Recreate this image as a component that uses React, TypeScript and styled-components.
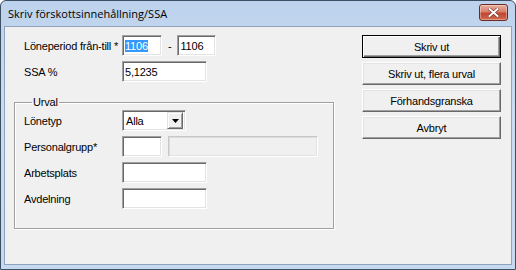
import React from 'react'
import styled, { createGlobalStyle } from 'styled-components'

const GlobalStyle = createGlobalStyle`
    html, body {
        margin:0;
        padding:0;
        background:#ffffff;
    }
    * {
        box-sizing:border-box;
    }
`

const Window = styled.div`
    width:516px;
    height:270px;
    display:flex;
    flex-direction:column;
    background:linear-gradient(#bdd2ec, #c9dcf1 40%, #c6d9ef);
    border:1px solid #3f4f63;
    border-radius:6px 6px 0 0;
    overflow:hidden;
`

const TitleBar = styled.div`
    height:25px;
    flex:none;
    display:flex;
    align-items:center;
    justify-content:space-between;
    padding:0 7px 0 7px;
    font-family:"Open Sans", "Noto Sans", sans-serif;
    font-size:11px;
    color:#000;
`

const CloseButton = styled.div`
    width:29px;
    height:17px;
    margin-top:-3px;
    border:1px solid #6b2b22;
    border-radius:3px;
    background:linear-gradient(#e6ae9f, #d9806b 45%, #c2452f 55%, #cf6a50);
    box-shadow:inset 0 0 0 1px rgba(255,255,255,0.35);
    display:flex;
    align-items:center;
    justify-content:center;
`

const Client = styled.div`
    flex:1;
    margin:0 3px 4px 3px;
    background:#f0f0f0;
    border:1px solid #8ea3bd;
    display:flex;
    padding:8px 0 0 9px;
    font-family:"Liberation Sans", Arial, sans-serif;
    font-size:11px;
    letter-spacing:-0.2px;
    color:#000;
`

const FormColumn = styled.div`
    width:320px;
    display:flex;
    flex-direction:column;
`

const Rows = styled.div`
    display:grid;
    grid-template-columns:98px auto;
    row-gap:5px;
    padding-left:10px;
    align-items:center;
`

const Label = styled.span`
    white-space:nowrap;
`

const Field = styled.div`
    display:flex;
    align-items:center;
    gap:6px;
`

const TextBox = styled.div<{ $w: number; $disabled?: boolean }>`
    width:${p => p.$w}px;
    height:21px;
    display:flex;
    align-items:center;
    padding-left:2px;
    background:${p => (p.$disabled ? '#f0f0f0' : '#ffffff')};
    border-style:solid;
    border-width:1px;
    border-color:${p =>
        p.$disabled ? '#c8c8c8 #ffffff #ffffff #c8c8c8' : '#a0a0a0 #ffffff #ffffff #a0a0a0'};
    box-shadow:${p =>
        p.$disabled
            ? 'inset 1px 1px 0 #dcdcdc, inset -1px -1px 0 #e3e3e3'
            : 'inset 1px 1px 0 #696969, inset -1px -1px 0 #e3e3e3'};
`

const Selected = styled.span`
    background:#3399ff;
    color:#ffffff;
`

const Group = styled.fieldset`
    margin:14px 0 0 0;
    padding:2px 0 0 9px;
    width:320px;
    height:133px;
    border:1px solid #a0a0a0;
    box-shadow:inset 1px 1px 0 #ffffff, 1px 1px 0 #ffffff;
`

const Legend = styled.legend`
    margin-left:8px;
    padding:0 1px;
    font-size:11px;
`

const GroupRows = styled.div`
    display:grid;
    grid-template-columns:98px auto;
    grid-auto-rows:21px;
    row-gap:5px;
    align-items:center;
`

const Select = styled.div`
    width:64px;
    height:21px;
    display:flex;
    align-items:center;
    justify-content:space-between;
    padding:0 2px 0 3px;
    background:#ffffff;
    border-style:solid;
    border-width:1px;
    border-color:#a0a0a0 #ffffff #ffffff #a0a0a0;
    box-shadow:inset 1px 1px 0 #696969, inset -1px -1px 0 #e3e3e3;
`

const DropButton = styled.div`
    width:16px;
    height:17px;
    display:flex;
    align-items:center;
    justify-content:center;
    background:#f0f0f0;
    border-style:solid;
    border-width:1px;
    border-color:#e3e3e3 #696969 #696969 #e3e3e3;
    box-shadow:inset 1px 1px 0 #ffffff, inset -1px -1px 0 #a0a0a0;
`

const ButtonColumn = styled.div`
    margin-left:28px;
    width:139px;
    display:flex;
    flex-direction:column;
    gap:4px;
`

const Button = styled.div<{ $default?: boolean }>`
    height:23px;
    display:flex;
    align-items:center;
    justify-content:center;
    background:#f0f0f0;
    border-style:solid;
    border-width:1px;
    border-color:${p => (p.$default ? '#000000' : '#ffffff #696969 #696969 #ffffff')};
    box-shadow:${p =>
        p.$default
            ? 'inset 1px 1px 0 #ffffff, inset -1px -1px 0 #696969, inset -2px -2px 0 #a0a0a0'
            : 'inset -1px -1px 0 #a0a0a0, inset 1px 1px 0 #e3e3e3'};
`

const App = () => {
    return (
        <>
            <GlobalStyle />
            <Window>
                <TitleBar>
                    <span>Skriv förskottsinnehållning/SSA</span>
                    <CloseButton>
                        <svg width="11" height="9" viewBox="0 0 11 9">
                            <path d="M1.5 1 L9.5 8 M9.5 1 L1.5 8" stroke="#7a2a20" strokeWidth="3.2" strokeLinecap="square" />
                            <path d="M1.5 1 L9.5 8 M9.5 1 L1.5 8" stroke="#ffffff" strokeWidth="2" strokeLinecap="square" />
                        </svg>
                    </CloseButton>
                </TitleBar>
                <Client>
                    <FormColumn>
                        <Rows>
                            <Label>Löneperiod från-till *</Label>
                            <Field>
                                <TextBox $w={40}><Selected>1106</Selected></TextBox>
                                <span>-</span>
                                <TextBox $w={39}>1106</TextBox>
                            </Field>
                            <Label>SSA %</Label>
                            <TextBox $w={85}>5,1235</TextBox>
                        </Rows>
                        <Group>
                            <Legend>Urval</Legend>
                            <GroupRows>
                                <Label>Lönetyp</Label>
                                <Select>
                                    <span>Alla</span>
                                    <DropButton>
                                        <svg width="7" height="4" viewBox="0 0 7 4">
                                            <path d="M0 0 H7 L3.5 4 Z" fill="#000" />
                                        </svg>
                                    </DropButton>
                                </Select>
                                <Label>Personalgrupp*</Label>
                                <Field>
                                    <TextBox $w={40} />
                                    <TextBox $w={150} $disabled />
                                </Field>
                                <Label>Arbetsplats</Label>
                                <TextBox $w={85} />
                                <Label>Avdelning</Label>
                                <TextBox $w={85} />
                            </GroupRows>
                        </Group>
                    </FormColumn>
                    <ButtonColumn>
                        <Button $default>Skriv ut</Button>
                        <Button>Skriv ut, flera urval</Button>
                        <Button>Förhandsgranska</Button>
                        <Button>Avbryt</Button>
                    </ButtonColumn>
                </Client>
            </Window>
        </>
    )
}

export default App
